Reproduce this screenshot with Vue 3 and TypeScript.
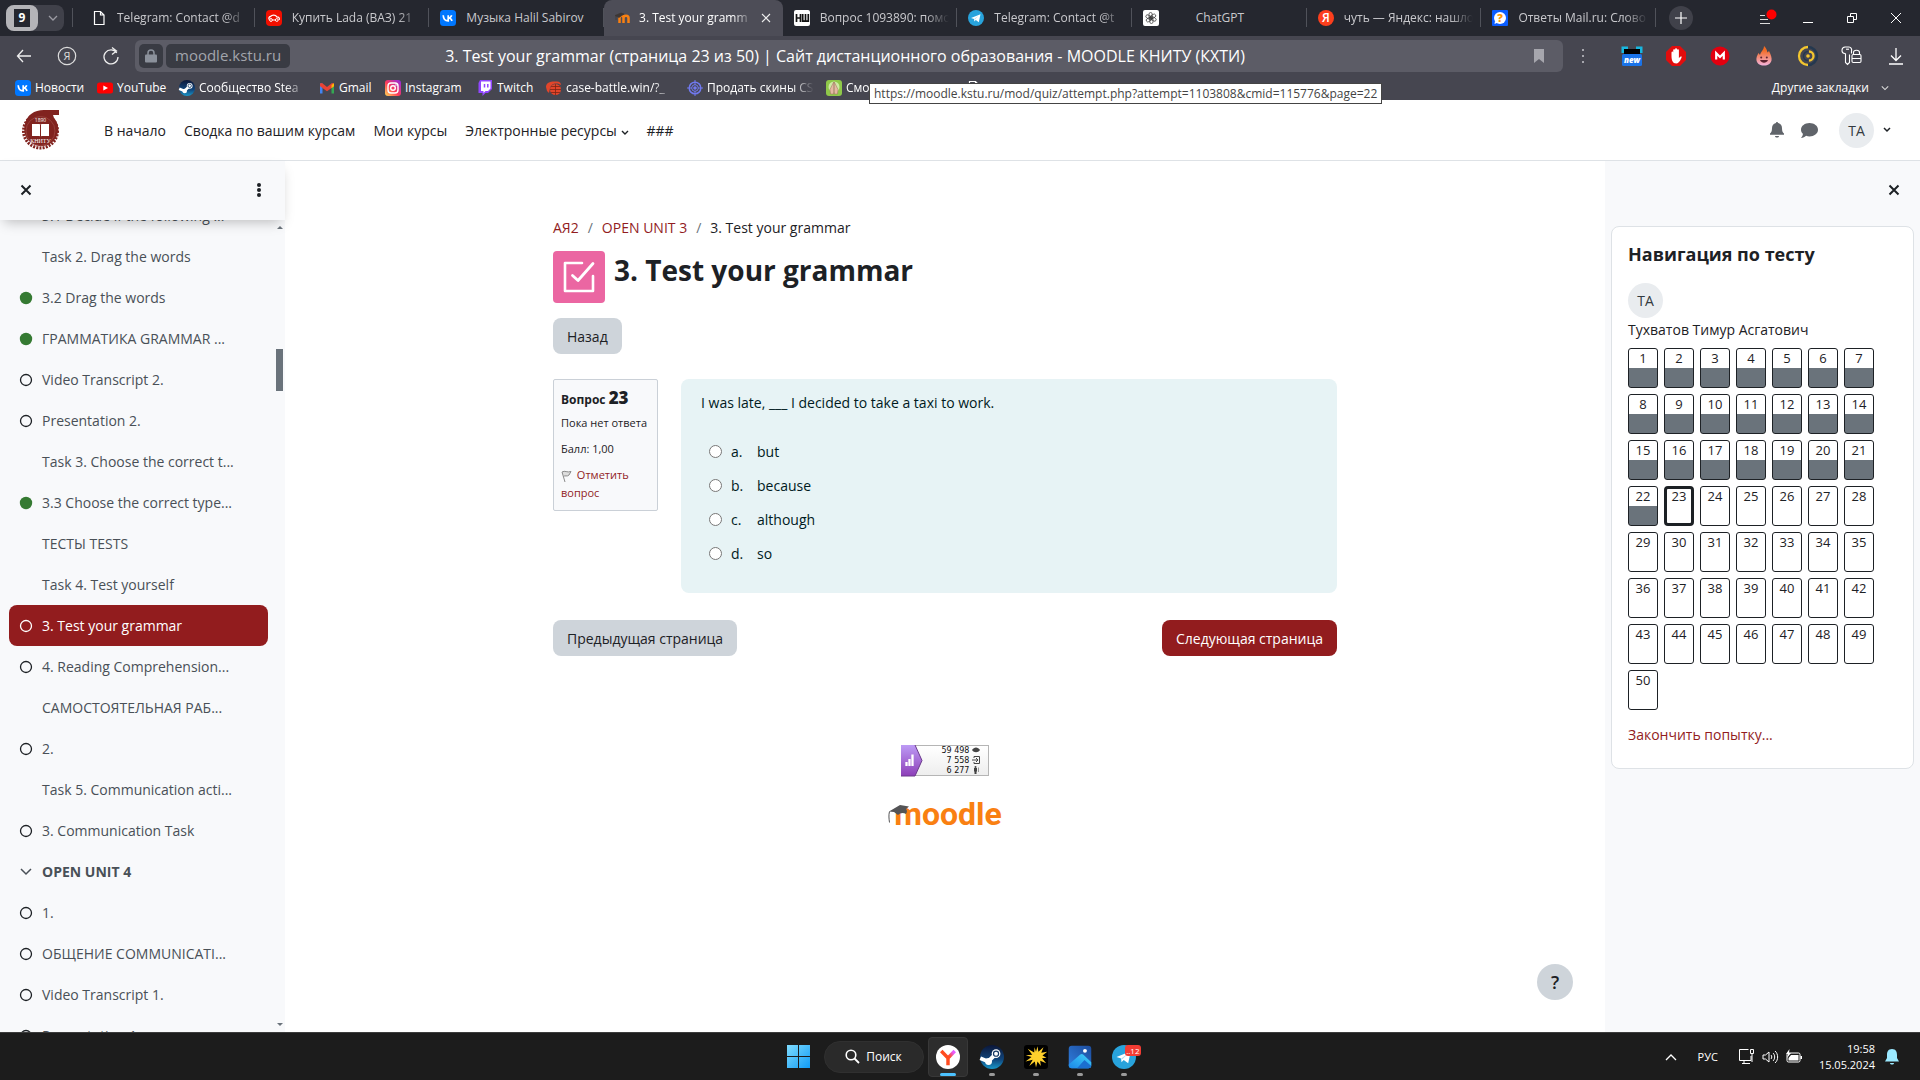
<script setup lang="ts">
import { ref } from 'vue'

interface Tab { icon: string; title: string; active?: boolean; whole?: boolean; centered?: boolean }
interface Bookmark { icon: string; title: string; width?: number }
interface CourseItem { title: string; state: 'none' | 'done' | 'todo' | 'section'; current?: boolean }

const tabs: Tab[] = [
  { icon: 'file', title: 'Telegram: Contact @d' },
  { icon: 'car', title: 'Купить Lada (ВАЗ) 21' },
  { icon: 'vk', title: 'Музыка Halil Sabirov', whole: true },
  { icon: 'moodle', title: '3. Test your gramm', active: true },
  { icon: 'nsh', title: 'Вопрос 1093890: помо' },
  { icon: 'telegram', title: 'Telegram: Contact @t' },
  { icon: 'gpt', title: 'ChatGPT', whole: true, centered: true },
  { icon: 'yandex', title: 'чуть — Яндекс: нашло' },
  { icon: 'mail', title: 'Ответы Mail.ru: Слово' },
]

const bookmarks: Bookmark[] = [
  { icon: 'vk', title: 'Новости', width: 50 },
  { icon: 'youtube', title: 'YouTube', width: 50 },
  { icon: 'steam', title: 'Сообщество Stea', width: 108 },
  { icon: 'gmail', title: 'Gmail', width: 34 },
  { icon: 'instagram', title: 'Instagram', width: 60 },
  { icon: 'twitch', title: 'Twitch', width: 37 },
  { icon: 'caseball', title: 'case-battle.win/?_', width: 109 },
  { icon: 'target', title: 'Продать скины CS', width: 107 },
  { icon: 'hands', title: 'Смо', width: 108 },
  { icon: 'file', title: '' },
]

const extensions = ['newext', 'hand', 'mega', 'flame', 'gold', 'keys', 'download']

const courseItems: CourseItem[] = [
  { title: '3.1 Decide if the following ...', state: 'none' },
  { title: 'Task 2. Drag the words', state: 'none' },
  { title: '3.2 Drag the words', state: 'done' },
  { title: 'ГРАММАТИКА GRAMMAR ...', state: 'done' },
  { title: 'Video Transcript 2.', state: 'todo' },
  { title: 'Presentation 2.', state: 'todo' },
  { title: 'Task 3. Choose the correct t...', state: 'none' },
  { title: '3.3 Choose the correct type...', state: 'done' },
  { title: 'ТЕСТЫ TESTS', state: 'none' },
  { title: 'Task 4. Test yourself', state: 'none' },
  { title: '3. Test your grammar', state: 'todo', current: true },
  { title: '4. Reading Comprehension...', state: 'todo' },
  { title: 'САМОСТОЯТЕЛЬНАЯ РАБ...', state: 'none' },
  { title: '2.', state: 'todo' },
  { title: 'Task 5. Communication acti...', state: 'none' },
  { title: '3. Communication Task', state: 'todo' },
  { title: 'OPEN UNIT 4', state: 'section' },
  { title: '1.', state: 'todo' },
  { title: 'ОБЩЕНИЕ COMMUNICATI...', state: 'todo' },
  { title: 'Video Transcript 1.', state: 'todo' },
  { title: 'Presentation 1.', state: 'todo' },
]

const options = [
  { key: 'a', text: 'but' },
  { key: 'b', text: 'because' },
  { key: 'c', text: 'although' },
  { key: 'd', text: 'so' },
]
const answer = ref('')
const currentQuestion = 23
const questionCount = 50

const taskbarApps = ['ybrowser', 'steam', 'star', 'photos', 'telegram']

const icons: Record<string, string> = {
  vk: '<rect width="16" height="16" rx="3.5" fill="#07f"/><path d="M3.2 5.2c.2 3.6 2 5.700 5 5.700V5.200M8.200 8c1.700 0 2.900-1.300 3.500-2.800M8.200 8c1.900 0 3.300 1.300 3.900 2.900" fill="none" stroke="#fff" stroke-width="1.700"/>',
  file: '<path d="M3.500 1.500h6l3.500 3.500v9.500h-9.500zM9.500 1.500v3.500h3.500" fill="none" stroke="#fff" stroke-width="1.200"/>',
  car: '<rect width="16" height="16" rx="4" fill="#f10f00"/><path d="M3.200 9.500C2.500 8 3 6.700 4.500 6.500 6 4.700 9.500 4.700 10.800 6.800c2 .1 2.900 1 2.500 3" fill="none" stroke="#fff" stroke-width="1.300"/><circle cx="5" cy="10" r="1.400" fill="none" stroke="#fff"/><circle cx="10.800" cy="10" r="1.400" fill="none" stroke="#fff"/><path d="M6.500 10h3" stroke="#fff"/>',
  moodle: '<path d="M3.500 13V8c0-3 4-3 4 0v5M7.500 8c0-3 5-3 5 0v5" transform="translate(1 0)" fill="none" stroke="#f98012" stroke-width="2.500"/><path d="M0 5.500 6 3l3 1-5 3.500zM1 5.500V10" fill="#3c3634" stroke="#3c3634" stroke-width=".7"/>',
  nsh: '<rect width="16" height="16" rx="2" fill="#fff"/><path d="M2.500 4v8M6.500 4v8M2.500 8h4M8.700 4v7.200h5.600V4M11.500 4v7" fill="none" stroke="#111" stroke-width="1.700"/>',
  telegram: '<circle cx="8" cy="8" r="8" fill="#28a3dc"/><path d="M3 8 12.500 4.200 10.800 12.200 7.800 10 6.300 11.500 6.100 9z" fill="#fff"/><path d="M6.100 9 10.500 5.800 7 9.500" fill="#b9dcf0"/>',
  gpt: '<rect width="16" height="16" rx="2" fill="#fff"/><g fill="none" stroke="#333" stroke-width=".7"><rect x="6" y="2.500" width="3.200" height="6.500" rx="1.600"/><rect x="6" y="2.500" width="3.200" height="6.500" rx="1.600" transform="rotate(60 8 8)"/><rect x="6" y="2.500" width="3.200" height="6.500" rx="1.600" transform="rotate(120 8 8)"/><rect x="6" y="2.500" width="3.200" height="6.500" rx="1.600" transform="rotate(180 8 8)"/><rect x="6" y="2.500" width="3.200" height="6.500" rx="1.600" transform="rotate(240 8 8)"/><rect x="6" y="2.500" width="3.200" height="6.500" rx="1.600" transform="rotate(300 8 8)"/></g>',
  yandex: '<circle cx="8" cy="8" r="8" fill="#fc3f1d"/><text x="8" y="12.300" text-anchor="middle" font-family="Open Sans, sans-serif" font-size="12" font-weight="600" fill="#fff">Я</text>',
  mail: '<rect width="16" height="16" rx="1" fill="#0a5cff"/><circle cx="8" cy="8" r="6" fill="#fff"/><path d="M3 11 2.500 14 6 12.500z" fill="#fff"/><text x="8" y="12" text-anchor="middle" font-family="Open Sans, sans-serif" font-size="11" font-weight="800" fill="#f90">?</text>',
  youtube: '<rect y="2.500" width="16" height="11" rx="2.500" fill="#f00"/><path d="M6.300 5.500 11 8l-4.700 2.500z" fill="#fff"/>',
  steam: '<defs><linearGradient id="stg" x1="0" y1="0" x2="0" y2="1"><stop offset="0" stop-color="#0b1638"/><stop offset=".6" stop-color="#10457c"/><stop offset="1" stop-color="#1897c9"/></linearGradient></defs><circle cx="8" cy="8" r="8" fill="url(#stg)"/><path d="M.2 8.800 5.500 11 10.500 6" fill="none" stroke="#fff" stroke-width="2.600"/><circle cx="10.700" cy="5.800" r="2.900" fill="#fff"/><circle cx="10.700" cy="5.800" r="1.700" fill="none" stroke="#173a66" stroke-width=".8"/><circle cx="5.700" cy="11" r="2.300" fill="#fff"/>',
  gmail: '<path d="M1 13.500V3.500h2.500v10z" fill="#4285f4"/><path d="M12.500 13.500V3.500H15v10z" fill="#34a853"/><path d="M1 3.500 3 3l5 4 5-4 2 .5v2.700L8 11.200 1 6.200z" fill="#ea4335"/><path d="M12.500 5 15 3.300v3l-2.500 1.900z" fill="#fbbc04"/>',
  instagram: '<defs><linearGradient id="ig" x1="0" y1="1" x2="1" y2="0"><stop offset="0" stop-color="#fd5"/><stop offset=".45" stop-color="#ff3a58"/><stop offset="1" stop-color="#8a2be8"/></linearGradient></defs><rect width="16" height="16" rx="3" fill="url(#ig)"/><rect x="3" y="3" width="10" height="10" rx="3" fill="none" stroke="#fff" stroke-width="1.400"/><circle cx="8" cy="8" r="2.300" fill="none" stroke="#fff" stroke-width="1.400"/><circle cx="11" cy="5" r=".8" fill="#fff"/>',
  twitch: '<path d="M1.500 3 3 0h12v9l-4 4H8.500L5.500 16v-3h-4z" fill="#9146ff"/><path d="M4 1.500h9.500v7L11 11H8.500l-2 2v-2H4z" fill="#fff"/><path d="M7.500 4v3.500M10.800 4v3.500" stroke="#9146ff" stroke-width="1.500"/>',
  caseball: '<circle cx="9.500" cy="9.500" r="5.500" fill="#e2452a"/><path d="M4 9.500h11M9.500 4v11M5 6.500h9M5 12.500h9" stroke="#7c2415" stroke-width=".8" fill="none"/><path d="M0 7C0 2 5 1 11 1.500c3 0 4 2 4 3.500l-3-1.500C7 3 5 5 4 8l-1 5-2-2z" fill="#e2452a"/>',
  target: '<g fill="none" stroke="#7079ee"><circle cx="8" cy="8" r="5.800" stroke-width="1.500"/><circle cx="8" cy="8" r="3.300"/><path d="M8 0v5M8 11v5M0 8h5M11 8h5"/></g><circle cx="8" cy="8" r="1.800" fill="#7079ee"/>',
  hands: '<rect width="16" height="16" rx="3" fill="#8fc849"/><circle cx="8" cy="7" r="5.500" fill="#cfe8a5"/><path d="M7.700 2 4 9.500 4.500 14h3.200zM8.300 2 12 9.500 11.500 14H8.300z" fill="#e5b9a3" stroke="#9a6f5c" stroke-width=".5"/>',
  newext: '<path d="M-1 5V0h5M17 5V0h-5" fill="none" stroke="#17b7e0" stroke-width="3"/><rect x="0" y="1" width="16" height="5" fill="#000"/><rect x="-2" y="6" width="20" height="12" rx="1.500" fill="#1a73e8"/><text x="8" y="15" text-anchor="middle" font-family="Open Sans, sans-serif" font-size="8" font-weight="800" font-style="italic" fill="#fff">new</text>',
  hand: '<path d="M4-2h8l6 6v8l-6 6H4l-6-6V4z" fill="#e20d0d"/><path d="M3.500 8V4.500c0-1.300 1.700-1.300 1.700 0V2.300c0-1.300 1.900-1.300 1.900 0V1.300c0-1.300 1.900-1.300 1.900 0v1c0-1.300 1.900-1.300 1.900 0V10c1-1.200 2.100-2 2.900-1.300C13.500 9.500 11.600 15.500 8.300 15.500 4.600 15.500 3.500 12 3.500 8z" fill="#fff"/>',
  mega: '<circle cx="8" cy="8" r="9.500" fill="#e3000f"/><path d="M4.200 11.500V5.200L8 9l3.800-3.800v6.300" fill="none" stroke="#fff" stroke-width="2.200"/>',
  flame: '<defs><linearGradient id="fl" x1="0" y1="0" x2="0" y2="1"><stop offset=".2" stop-color="#f26a21"/><stop offset="1" stop-color="#f4b3dc"/></linearGradient></defs><path d="M8-2c3 3 3 5 3.500 6.500L13 3c2 4 3 7 2.500 9.500-.7 3-3.500 5-7.500 5S1 15.500.5 12.500C0 10 1 7.500 2.500 5L4 7c1-4 4-5 4-9z" fill="url(#fl)"/><circle cx="5.200" cy="9.500" r="1" fill="#5b2330"/><circle cx="10.800" cy="9.500" r="1" fill="#5b2330"/><path d="M4 12c1.500 3.500 6.500 3.500 8 0z" fill="#5b2330"/>',
  gold: '<path d="M8-1a9 9 0 0 1 0 18" fill="none" stroke="#24384f" stroke-width="2.500"/><path d="M8-1a9 9 0 0 0 0 18M9 3.500a4.500 4.500 0 1 1 0 9" fill="none" stroke="#f3c62f" stroke-width="2.300"/><path d="M8 3.500a4.500 4.500 0 0 0 0 9" fill="none" stroke="#24384f" stroke-width="1.500"/><circle cx="8" cy="8" r="1.800" fill="#f3c62f"/>',
  keys: '<g fill="none" stroke="#fff" stroke-width="1.100"><path d="M7.500 5.500V3A3 3 0 0 0 5-1H1.500A3 3 0 0 0 1 5.500l.5.500v8.500l2 2 2-2V6.500"/><path d="M2 1.200h3"/><rect x="8" y="6.500" width="9" height="8" rx="1.200"/><path d="M9.500 6.500V4.500c0-3 6-3 6 0v2M8 10.500h9"/></g>',
  download: '<path d="M8 0v12M3 7.500l5 5 5-5M1 16h14" fill="none" stroke="#fff" stroke-width="1.300"/>',
  ybrowser: '<defs><linearGradient id="yb" x1="0" y1="1" x2="1" y2="0"><stop offset=".3" stop-color="#ff4b1f"/><stop offset=".6" stop-color="#ff4b1f"/><stop offset=".9" stop-color="#e75bff"/></linearGradient></defs><circle cx="8" cy="8" r="8" fill="#fff"/><path d="M3.500 4 8 8.700 12.500 4M8 8v5.500" fill="none" stroke="url(#yb)" stroke-width="2.300"/>',
  star: '<rect width="16" height="16" rx="2" fill="#000"/><path d="M9 .8 9.600 4.500 13 1.500 11.500 5.200 15.500 4.500 12.300 7 15 8.500 12 8.800 14.800 12.200 10.800 10.500 11.200 14 9 11 8 15 7.200 11 3.500 14 5.800 9.800 1 11 5 8 1.200 6.800 5.500 6.500 2.500 2.500 6.800 5 7 1.500 8 4.500z" fill="#ffd02c"/>',
  photos: '<defs><linearGradient id="ph" x1="0" y1="1" x2="1" y2="0"><stop offset="0" stop-color="#2f7fe0"/><stop offset="1" stop-color="#1d4c9c"/></linearGradient><linearGradient id="ph2" x1="0" y1="1" x2="1" y2="0"><stop offset="0" stop-color="#1c86e6"/><stop offset="1" stop-color="#3fd2fa"/></linearGradient></defs><rect x=".5" y=".5" width="15" height="15" rx="2" fill="url(#ph)"/><path d="M.5 13 8 6.500c.8-.7 1.600-.7 2.300 0l5.200 5V13.500a2 2 0 0 1-2 2h-11a2 2 0 0 1-2-2z" fill="url(#ph2)"/><path d="M6 15.500l5-5.500 4.500 4a2 2 0 0 1-2 1.500z" fill="#1b6fd0"/><circle cx="11.300" cy="3.900" r="1.300" fill="#fff"/>',
}
</script>

<template>
  <div class="screen">
    <header class="browser">
      <div class="tabstrip">
        <button class="group" aria-label="Группы вкладок">
          <span class="group-count">9</span>
          <svg width="10" height="6" viewBox="0 0 10 6"><path d="M1 1l4 4 4-4" fill="none" stroke="#9b9ba3" stroke-width="1.3" /></svg>
        </button>
        <div class="tabs">
          <div v-for="tab in tabs" :key="tab.title" class="tab" :class="{ active: tab.active, whole: tab.whole, centered: tab.centered }">
            <svg class="i16" viewBox="0 0 16 16" v-html="icons[tab.icon]"></svg>
            <span class="tab-title">{{ tab.title }}</span>
            <button v-if="tab.active" class="bare tab-close" aria-label="Закрыть">
              <svg width="10" height="10" viewBox="0 0 10 10"><path d="M1 1l8 8M9 1L1 9" stroke="#eee" stroke-width="1.1" /></svg>
            </button>
          </div>
        </div>
        <button class="newtab" aria-label="Новая вкладка">
          <svg width="12" height="12" viewBox="0 0 12 12"><path d="M6 0v12M0 6h12" stroke="#fff" stroke-width="1.2" /></svg>
        </button>
        <div class="window-buttons">
          <button class="bare" aria-label="Меню"><svg width="20" height="18" viewBox="0 0 20 18"><path d="M2 6.500h5M2 10.500h8M2 14.500h10" stroke="#ddd" stroke-width="1.200" /><circle cx="13.500" cy="5.500" r="5" fill="#f00" /></svg></button>
          <button class="bare" aria-label="Свернуть"><svg width="12" height="12" viewBox="0 0 12 12"><path d="M1 10.500h10" stroke="#fff" /></svg></button>
          <button class="bare" aria-label="Восстановить"><svg width="12" height="12" viewBox="0 0 12 12"><path d="M1.500 4.500h6v6h-6zM4.500 4.500v-3h6v6h-3" fill="none" stroke="#fff" /></svg></button>
          <button class="bare" aria-label="Закрыть окно"><svg width="12" height="12" viewBox="0 0 12 12"><path d="M1 1l10 10M11 1L1 11" stroke="#fff" /></svg></button>
        </div>
      </div>

      <div class="toolbar">
        <div class="nav-buttons">
          <button class="bare" aria-label="Назад"><svg width="16" height="14" viewBox="0 0 16 14"><path d="M15 7H1.500M7 1L1.500 7 7 13" fill="none" stroke="#eee" stroke-width="1.300" /></svg></button>
          <button class="bare" aria-label="Яндекс"><svg width="20" height="20" viewBox="0 0 20 20"><circle cx="10" cy="10" r="8.700" fill="none" stroke="#ddd" stroke-width="1.200" /><text x="10" y="14" text-anchor="middle" font-size="11" fill="#ddd">Я</text></svg></button>
          <button class="bare" aria-label="Обновить"><svg width="18" height="18" viewBox="0 0 18 18"><path d="M14.800 6A7 7 0 1 0 16 10M10 .5l4.500 3.500L10 7.500" fill="none" stroke="#eee" stroke-width="1.300" /></svg></button>
        </div>
        <div class="omnibox">
          <span class="lock"><svg width="12" height="14" viewBox="0 0 12 14"><rect x="0" y="5.500" width="12" height="8" rx="1" fill="#8b919b" /><path d="M3 6V4a3 3 0 0 1 6 0v2" fill="none" stroke="#8b919b" stroke-width="1.500" /></svg></span>
          <span class="host">moodle.kstu.ru</span>
          <span class="page-title">3. Test your grammar (страница 23 из 50) | Сайт дистанционного образования - MOODLE КНИТУ (КХТИ)</span>
          <svg class="mark" width="10" height="14" viewBox="0 0 10 14"><path d="M0 0h10v14L5 10 0 14z" fill="#a6a6ad" /></svg>
        </div>
        <svg width="3" height="14" viewBox="0 0 3 14" fill="#a6a6ad"><rect width="2" height="2" /><rect y="6" width="2" height="2" /><rect y="12" width="2" height="2" /></svg>
        <div class="extensions">
          <button v-for="name in extensions" :key="name" class="bare" :aria-label="name"><svg class="i16" viewBox="0 0 16 16" v-html="icons[name]"></svg></button>
        </div>
      </div>

      <nav class="bookmarks">
        <a v-for="b in bookmarks" :key="b.title" href="#" class="bookmark">
          <svg class="i16" viewBox="0 0 16 16" v-html="icons[b.icon]"></svg>
          <span v-if="b.width" class="bookmark-title" :class="{ fade: b.width > 100 }" :style="{ width: b.width + 'px' }">{{ b.title }}</span>
        </a>
        <button class="bare other">Другие закладки
          <svg width="8" height="6" viewBox="0 0 10 6"><path d="M1 1l4 4 4-4" fill="none" stroke="#ddd" stroke-width="1.300" /></svg>
        </button>
      </nav>
      <div class="url-tip">https://moodle.kstu.ru/mod/quiz/attempt.php?attempt=1103808&amp;cmid=115776&amp;page=22</div>
    </header>

    <header class="site">
      <svg class="crest" width="38" height="40" viewBox="0 0 38 40">
        <circle cx="18.500" cy="21" r="17" fill="none" stroke="#81231f" stroke-width="3" stroke-dasharray="2 1.200" />
        <path d="M37 0v5h-6l1 3A17 17 0 1 1 3 14C5 5 12 0 22 0z" fill="#81231f" />
        <circle cx="18.500" cy="21" r="14.500" fill="none" stroke="#9d4a45" stroke-width=".7" />
        <text x="18.500" y="12" text-anchor="middle" font-size="5" fill="#fff">1890</text>
        <path d="M10 14h7.500l1 1 1-1H27v12h-7.500l-1 1-1-1H10z" fill="#fff" />
        <path d="M18.500 15v12" stroke="#81231f" />
        <text x="18.500" y="33" text-anchor="middle" font-family="Liberation Serif, serif" font-size="6" fill="#fff">КНИТУ</text>
      </svg>
      <nav class="site-nav">
        <a href="#">В начало</a>
        <a href="#">Сводка по вашим курсам</a>
        <a href="#">Мои курсы</a>
        <a href="#">Электронные ресурсы <svg width="8" height="6" viewBox="0 0 8 6"><path d="M1 1l3 3 3-3" fill="none" stroke="#1d2125" stroke-width="1.400" /></svg></a>
        <a href="#">###</a>
      </nav>
      <div class="user">
        <button class="bare" aria-label="Уведомления"><svg width="14" height="16" viewBox="0 0 14 16" fill="#60646a"><path d="M7 0c.7 0 1 .5 1 1 3 .6 4 2.800 4 5.200 0 3 .8 4.300 2 5.300v1.300H0v-1.300c1.200-1 2-2.300 2-5.300C2 3.800 3 1.600 6 1c0-.5.3-1 1-1zM5 14h4c0 2-4 2-4 0z" /></svg></button>
        <button class="bare" aria-label="Сообщения"><svg width="17" height="15" viewBox="0 0 17 15" fill="#60646a"><path d="M8.500 0C13 0 17 2.800 17 6.700s-4 6.700-8.500 6.700c-1.200 0-2.400-.2-3.400-.6C4 13.900 2 15 0 15c1-1 1.900-2.600 1.900-4.200C.7 9.700 0 8.300 0 6.700 0 2.800 4 0 8.500 0z" /></svg></button>
        <span class="avatar">ТА</span>
        <svg width="8" height="6" viewBox="0 0 8 6"><path d="M1 1l3 3 3-3" fill="none" stroke="#1d2125" stroke-width="1.500" /></svg>
      </div>
    </header>

    <div class="page">
      <aside class="index">
        <div class="index-head">
          <button class="bare" aria-label="Закрыть"><svg width="12" height="12" viewBox="0 0 12 12"><path d="M1.500 1.500l9 9M10.500 1.500l-9 9" stroke="#1d2125" stroke-width="2" /></svg></button>
          <button class="bare" aria-label="Ещё"><svg width="4" height="14" viewBox="0 0 4 14" fill="#1d2125"><circle cx="2" cy="2" r="2" /><circle cx="2" cy="7" r="2" /><circle cx="2" cy="12" r="2" /></svg></button>
        </div>
        <div class="index-body">
          <ul>
            <li v-for="item in courseItems" :key="item.title">
              <a href="#" :class="{ current: item.current, section: item.state === 'section' }">
                <svg width="14" height="14" viewBox="0 0 14 14">
                  <circle v-if="item.state === 'done'" cx="7" cy="7" r="6.200" fill="#357a32" />
                  <circle v-if="item.state === 'todo'" cx="7" cy="7" r="5.500" fill="none" stroke="currentColor" stroke-width="1.300" class="ring" />
                  <path v-if="item.state === 'section'" d="M2 4l5 5 5-5" fill="none" stroke="#495057" stroke-width="1.500" />
                </svg>
                <span>{{ item.title }}</span>
              </a>
            </li>
          </ul>
          <div class="rail">
            <svg width="6" height="4" viewBox="0 0 6 4"><path d="M0 4l3-3 3 3z" fill="#6a737b" /></svg>
            <div class="track"><div class="thumb"></div></div>
            <svg width="6" height="4" viewBox="0 0 6 4"><path d="M0 0l3 3 3-3z" fill="#6a737b" /></svg>
          </div>
        </div>
      </aside>

      <main class="main">
        <div class="content">
          <nav class="crumbs">
            <a href="#">АЯ2</a><span class="slash">/</span><a href="#">OPEN UNIT 3</a><span class="slash">/</span><span>3. Test your grammar</span>
          </nav>
          <div class="heading">
            <span class="activity-icon">
              <svg width="32" height="32" viewBox="0 0 32 32"><path d="M19 2H2v28h28V15" fill="none" stroke="#fff" stroke-width="2.600" stroke-linecap="round" stroke-linejoin="round" /><path d="M9.500 14.500l5.500 5L30 2.500" fill="none" stroke="#fff" stroke-width="2.800" stroke-linecap="round" stroke-linejoin="round" /></svg>
            </span>
            <h1>3. Test your grammar</h1>
          </div>
          <button class="btn grey">Назад</button>

          <form class="question" @submit.prevent>
            <section class="info">
              <h2>Вопрос <b>{{ currentQuestion }}</b></h2>
              <p>Пока нет ответа</p>
              <p>Балл: 1,00</p>
              <a href="#"><svg width="11" height="13" viewBox="0 0 11 13"><path d="M1 2l3 10M1 2c3-2 5 1 9-.5L8 5C6 7 4 5 2.500 6.500" fill="#ddd" stroke="#8b8b8b" /></svg> Отметить вопрос</a>
            </section>
            <fieldset class="formulation">
              <legend>I was late, ___ I decided to take a taxi to work.</legend>
              <div v-for="o in options" :key="o.key" class="option">
                <input :id="'answer-' + o.key" v-model="answer" type="radio" name="answer" :value="o.key" />
                <label :for="'answer-' + o.key"><span class="letter">{{ o.key }}.</span>{{ o.text }}</label>
              </div>
            </fieldset>
          </form>
          <div class="pager">
            <button class="btn grey">Предыдущая страница</button>
            <button class="btn red">Следующая страница</button>
          </div>

          <footer class="foot">
            <a href="#" class="counter" aria-label="Статистика">
              <svg width="22" height="31" viewBox="0 0 22 31"><defs><linearGradient id="cg" x1="0" y1="0" x2="0" y2="1"><stop offset="0" stop-color="#bd9bf5" /><stop offset="1" stop-color="#8d3fb8" /></linearGradient></defs><path d="M0 0h14l7 15.500L14 31H0z" fill="url(#cg)" /><path d="M14 0l7 15.500L14 31H0" fill="none" stroke="#6b3a8c" /><path d="M5.500 21v-4M8.500 21v-7M11.500 21V9.500" stroke="#fff" stroke-width="2.300" /></svg>
              <span class="counter-rows">
                <span>59 498 <svg width="8" height="8" viewBox="0 0 8 8"><path d="M0 4c2-3.500 6-3.500 8 0-2 3-6 3-8 0z" fill="#444" /></svg></span>
                <span>7 558 <svg width="8" height="8" viewBox="0 0 8 8"><path d="M2 2V.5h5.500v7H2V6M0 4h5.500M4 2l2 2-2 2" fill="none" stroke="#444" /></svg></span>
                <span>6 277 <svg width="8" height="8" viewBox="0 0 8 8"><circle cx="3.500" cy="1" r="1" fill="#444" /><path d="M2 2h3v3.500H4.500V8h-2V5.500H2z" fill="#444" /><path d="M6.500 1.500V6" stroke="#999" /></svg></span>
              </span>
            </a>
            <a href="#" class="moodle">
              <svg width="22" height="18" viewBox="0 0 22 18"><path d="M1 6.500 12 0l9 1.500-3 2.500c1.500 1.500 1 3.500 0 5-3-2-6-1-8 1L6 7l-5-.5z" fill="#545456" /><path d="M1.500 6.500C.5 10 1 14 1.500 17.500" fill="none" stroke="#545456" /></svg><span>moodle</span>
            </a>
          </footer>
        </div>
        <button class="help" aria-label="Помощь">?</button>
      </main>

      <aside class="drawer">
        <button class="bare drawer-close" aria-label="Закрыть"><svg width="12" height="12" viewBox="0 0 12 12"><path d="M1.500 1.500l9 9M10.500 1.500l-9 9" stroke="#1d2125" stroke-width="2" /></svg></button>
        <section class="card">
          <h2>Навигация по тесту</h2>
          <span class="avatar">ТА</span>
          <div class="name">Тухватов Тимур Асгатович</div>
          <div class="grid">
            <a v-for="n in questionCount" :key="n" href="#" :class="{ saved: n < currentQuestion, here: n === currentQuestion }">{{ n }}</a>
          </div>
          <a href="#" class="finish">Закончить попытку...</a>
        </section>
      </aside>
    </div>

    <footer class="taskbar">
      <div class="task-center">
        <button class="bare start" aria-label="Пуск"><svg width="23" height="23" viewBox="0 0 23 23"><defs><linearGradient id="wg" x1="0" y1="0" x2="1" y2="1"><stop offset="0" stop-color="#7fdcff" /><stop offset="1" stop-color="#109bf5" /></linearGradient></defs><path d="M0 0h11v11H0zM12 0h11v11H12zM0 12h11v11H0zM12 12h11v11H12z" fill="url(#wg)" /></svg></button>
        <button class="search"><svg width="15" height="15" viewBox="0 0 15 15"><circle cx="6" cy="6" r="4.800" fill="none" stroke="#fff" stroke-width="1.600" /><path d="M9.500 9.500l4.500 4.500" stroke="#fff" stroke-width="1.800" /></svg>Поиск</button>
        <button v-for="app in taskbarApps" :key="app" class="app" :class="{ front: app === 'ybrowser' }" :aria-label="app">
          <svg width="24" height="24" viewBox="0 0 16 16" v-html="icons[app]"></svg>
          <span v-if="app === 'telegram'" class="badge">..12</span>
        </button>
      </div>
      <div class="tray">
        <svg width="12" height="8" viewBox="0 0 12 8"><path d="M1 7l5-5 5 5" fill="none" stroke="#fff" stroke-width="1.300" /></svg>
        <span class="lang">РУС</span>
        <svg width="17" height="17" viewBox="0 0 17 17" fill="none" stroke="#fff"><path d="M10.500 1.500h-9v11h11.500V8M4 15.500h8M6 13v2M12.500 1.500h3v4h-3zM14 6v8" /></svg>
        <svg width="17" height="14" viewBox="0 0 17 14" fill="none" stroke="#fff"><path d="M1 5v4h2.500L7 12V2L3.500 5zM9 5c1 1 1 3 0 4M11 3c2.200 2 2.200 6 0 8M13 1c3.500 3 3.500 9 0 12" /></svg>
        <svg width="17" height="15" viewBox="0 0 17 15"><rect x="1" y="4" width="13" height="9" rx="1.500" fill="none" stroke="#fff" /><path d="M5 6h7.500v5.500H2.500V9zM14.500 7h1.500v3h-1.500z" fill="#fff" /><path d="M3.500 0 0 5h2L1 9l4-5H3z" fill="#fff" /></svg>
        <div class="clock"><span>19:58</span><span>15.05.2024</span></div>
        <svg width="14" height="16" viewBox="0 0 14 16" fill="#9be9ff"><path d="M7 0c4 0 5 3 5 6v3l2 3.500H0L2 9V6c0-3 1-6 5-6zM5 14h4c0 2-4 2-4 0z" /></svg>
      </div>
    </footer>
  </div>
</template>

<style>
body { margin: 0; }
</style>

<style scoped>
* { box-sizing: border-box; }
.screen {
  display: flex; flex-direction: column; height: 100vh; overflow: hidden; background: #fff; color: #1d2125;
  font: 14px/21px "Open Sans", "Noto Sans", sans-serif;
}
a { color: #921c1e; text-decoration: none; }
button { font: inherit; cursor: pointer; }
svg { flex: none; overflow: visible; }
.bare { display: flex; align-items: center; padding: 0; border: 0; background: none; color: inherit; }
.i16 { width: 16px; height: 16px; }

.browser { position: relative; flex: none; background: #464650; color: #fff; font-size: 12px; line-height: 18px; }
.tabstrip { display: flex; align-items: center; height: 36px; padding: 0 18px 0 6px; background: #25272f; }
.group { display: flex; flex: none; align-items: center; gap: 10px; width: 58px; height: 26px; padding: 0; border: 0; border-radius: 8px; background: #40414a; }
.group-count { display: flex; align-items: center; justify-content: center; width: 32px; height: 26px; border: 4px solid #b4b4b8; border-width: 4px 8px; border-radius: 8px; background: #25272f; color: #fff; font-weight: 700; }
.tabs { display: flex; flex: 0 1 1584px; min-width: 0; height: 36px; margin-left: 8px; padding-left: 8px; background: linear-gradient(#50525a, #50525a) 0 8px / 1px 19px no-repeat; }
.tab { display: flex; flex: 1 1 0; min-width: 0; align-items: center; gap: 10px; padding: 0 8px 0 11px; background: linear-gradient(#50525a, #50525a) right 8px / 1px 19px no-repeat; color: #c9c9cd; }
.tab-title { flex: 1; overflow: hidden; white-space: nowrap; -webkit-mask-image: linear-gradient(90deg, #000 82%, transparent); mask-image: linear-gradient(90deg, #000 82%, transparent); }
.tab.whole .tab-title { -webkit-mask-image: none; mask-image: none; }
.tab.centered .tab-title { padding-right: 28px; text-align: center; }
.tab.active { gap: 8px; padding-right: 12px; border-radius: 8px 8px 0 0; background: #4d4d57; color: #fff; }
.newtab { display: flex; flex: none; align-items: center; justify-content: center; width: 24px; height: 24px; margin-left: 13px; padding: 0; border: 0; border-radius: 50%; background: #40414a; }
.window-buttons { display: flex; align-items: center; gap: 32px; margin-left: auto; }
.window-buttons .bare:first-child { margin-right: -8px; }

.toolbar { display: flex; align-items: center; gap: 19px; height: 38px; padding: 2px 16px 0 16px; }
.nav-buttons { display: flex; gap: 25px; margin-right: -4px; }
.omnibox { display: flex; flex: 1; min-width: 0; align-items: center; gap: 3px; height: 32px; padding: 0 19px 0 4px; border-radius: 6px; background: #5c5c66; }
.lock { display: flex; flex: none; align-items: center; justify-content: center; width: 24px; height: 24px; border-radius: 5px; background: #393b43; }
.host { height: 24px; padding: 0 9px; border-radius: 5px; background: #393b43; color: #a2a5ac; font-size: 15px; line-height: 23px; }
.page-title { flex: 1; padding-right: 134px; text-align: center; font-size: 16px; line-height: 22px; white-space: nowrap; overflow: hidden; }
.extensions { display: flex; gap: 28px; margin-left: 20px; }

.bookmarks { display: flex; align-items: center; gap: 12px; height: 26px; padding: 2px 31px 0 15px; }
.bookmark { display: flex; align-items: center; gap: 4px; color: #fff; }
.bookmark-title { overflow: hidden; white-space: nowrap; }
.bookmark-title.fade { -webkit-mask-image: linear-gradient(90deg, #000 80%, transparent); mask-image: linear-gradient(90deg, #000 80%, transparent); }
.other { gap: 12px; margin-left: auto; }
.url-tip { position: absolute; left: 869px; top: 83px; padding: 0 4px; border: 1px solid #444; background: #fff; color: #444; font-size: 12px; line-height: 19px; white-space: nowrap; }

.site { display: flex; flex: none; align-items: center; height: 61px; padding: 0 29px 0 22px; border-bottom: 1px solid #dee2e6; }
.site-nav { display: flex; gap: 18px; margin-left: 44px; }
.site-nav a { color: #1d2125; white-space: nowrap; }
.user { display: flex; align-items: center; gap: 17px; margin-left: auto; }
.user > :last-child { margin-left: -8px; }
.user .avatar { margin-left: 4px; }
.avatar { display: flex; align-items: center; justify-content: center; width: 35px; height: 35px; border-radius: 50%; background: #e9ecef; color: #343a40; }

.page { display: flex; flex: 1; min-height: 0; }
.index { display: flex; flex: none; flex-direction: column; width: 285px; background: #f8f9fb; }
.index-head { position: relative; z-index: 1; display: flex; flex: none; align-items: center; justify-content: space-between; height: 59px; padding: 0 24px 2px 20px; background: #f8f9fb; box-shadow: 0 6px 12px -4px rgba(0, 0, 0, .25); }
.index-body { display: flex; flex: 1; min-height: 0; overflow: hidden; }
.index ul { flex: 1; margin: -25px 8px 0 9px; padding: 0; list-style: none; }
.index li a { display: flex; align-items: center; gap: 9px; height: 41px; padding: 0 10px; border-radius: 8px; color: #495057; white-space: nowrap; }
.ring { color: #1d2125; }
.index li a.current { background: #921c1e; color: #fff; }
.current .ring { color: #fff; }
.index li a.section { font-weight: 700; }
.rail { display: flex; flex-direction: column; align-items: center; width: 7px; margin: 5px 2px 5px 0; }
.track { flex: 1; }
.thumb { width: 7px; height: 42px; margin-top: 120px; background: #6a737b; }

.main { position: relative; flex: 1; }
.content { max-width: 784px; margin: 0 auto; padding-top: 56px; }
.crumbs { display: flex; gap: 9px; color: #1d2125; }
.slash { color: #6a737b; }
.heading { display: flex; gap: 9px; margin-top: 13px; }
.activity-icon { display: flex; align-items: center; justify-content: center; width: 52px; height: 52px; border-radius: 4px; background: #eb66a2; }
h1 { margin: 0; font-size: 28px; line-height: 38px; font-weight: 700; }
.btn { height: 36px; padding: 0 14px; border: 0; border-radius: 8px; color: #1d2125; white-space: nowrap; }
.grey { background: #ced4da; }
.red { background: #921c1e; color: #fff; }
.heading + .btn { margin-top: 15px; }
.question { display: flex; align-items: flex-start; gap: 23px; margin-top: 25px; }
.info { flex: none; width: 105px; height: 132px; padding: 8px 7px; border: 1px solid #cad0d7; border-radius: 2px; background: #f8f9fb; font-size: 11px; line-height: 18px; }
.info h2 { margin: 0; font-size: 12px; line-height: 20px; white-space: nowrap; }
.info h2 b { font-size: 17px; }
.info p { margin: 4px 0 8px; white-space: nowrap; }
.info svg { margin-right: 2px; vertical-align: -4px; }
.formulation { flex: 1; min-width: 0; height: 214px; margin: 0; padding: 13px 20px; border: 0; border-radius: 8px; background: #e7f3f5; color: #001a1e; }
.formulation legend { float: left; width: 100%; margin-bottom: 21px; padding: 0; }
.option { display: flex; clear: both; align-items: center; height: 34px; padding-left: 8px; }
.option input { width: 13px; height: 13px; margin: 0 9px 0 0; }
.letter { display: inline-block; width: 26px; }
.pager { display: flex; justify-content: space-between; margin-top: 27px; }
.foot { display: flex; flex-direction: column; align-items: center; margin-top: 89px; }
.counter { display: flex; justify-content: space-between; width: 88px; height: 31px; border: 1px solid #b5b5b5; background: linear-gradient(#fff, #eee); color: #111; font: 8px/10px "DejaVu Sans", sans-serif; }
.counter > svg { margin: -1px; }
.counter-rows { display: flex; flex-direction: column; align-items: flex-end; padding-right: 8px; }
.counter-rows svg { vertical-align: -1px; }
.moodle { display: flex; margin-top: 19px; color: #f98012; font: 700 32px/38px Roboto, sans-serif; }
.moodle svg { z-index: 1; margin: 10px -16px 0 0; }
.help { position: absolute; right: 32px; bottom: 32px; width: 36px; height: 36px; padding: 0; border: 0; border-radius: 50%; background: #ced4da; font-size: 18px; font-weight: 600; color: #1d2125; }

.drawer { display: flex; flex: none; flex-direction: column; width: 315px; padding: 23px 6px 0; background: #f8f9fb; }
.drawer-close { align-self: flex-end; height: 12px; margin: 0 14px 30px 0; }
.card { padding: 15px 16px 23px; border: 1px solid #dee2e6; border-radius: 8px; background: #fff; }
.card h2 { margin: 0 0 16px; font-size: 18px; line-height: 25px; }
.card .name { margin: 1px 0 8px; }
.grid { display: flex; flex-wrap: wrap; gap: 6px; width: 260px; }
.grid a { width: 30px; height: 40px; border: 1px solid #1d2125; border-radius: 3px; background: #fff; color: #1d2125; font-size: 13px; line-height: 19px; text-align: center; }
.grid a.saved { background: linear-gradient(#fff 19px, #6a737b 19px); }
.grid a.here { border-width: 3px; border-radius: 4px; line-height: 15px; }
.finish { display: block; margin-top: 14px; }

.taskbar { display: grid; flex: none; grid-template-columns: 1fr auto 1fr; align-items: center; height: 48px; padding-left: 10px; border-top: 1px solid #3c3c3c; background: #1c1c1c; color: #fff; font-size: 11px; line-height: 16px; }
.task-center { display: flex; grid-column: 2; align-items: center; gap: 4px; }
.start { margin-right: 10px; }
.search { display: flex; align-items: center; justify-content: center; gap: 6px; width: 100px; height: 32px; border: 1px solid #303030; border-radius: 16px; background: #2a2a2a; color: #fff; font-size: 12px; }
.app { position: relative; display: flex; align-items: center; justify-content: center; width: 40px; height: 40px; padding: 0; border: 0; border-radius: 4px; background: none; }
.app::after { content: ""; position: absolute; bottom: 1px; width: 6px; height: 3px; border-radius: 2px; background: #9a9a9a; }
.app.front { border: 1px solid #383838; background: #2d2d2d; }
.app.front::after { width: 16px; bottom: 0; background: #4cc2ff; }
.badge { position: absolute; right: 3px; top: 8px; padding: 0 1px; border-radius: 3px; background: #f23c34; color: #fff; font-size: 8px; line-height: 11px; }
.tray { display: flex; grid-column: 3; align-items: center; justify-content: flex-end; gap: 7px; padding-right: 21px; }
.lang { margin: 0 13px 0 14px; }
.clock { display: flex; flex-direction: column; margin: 0 3px 0 9px; text-align: right; }
</style>
